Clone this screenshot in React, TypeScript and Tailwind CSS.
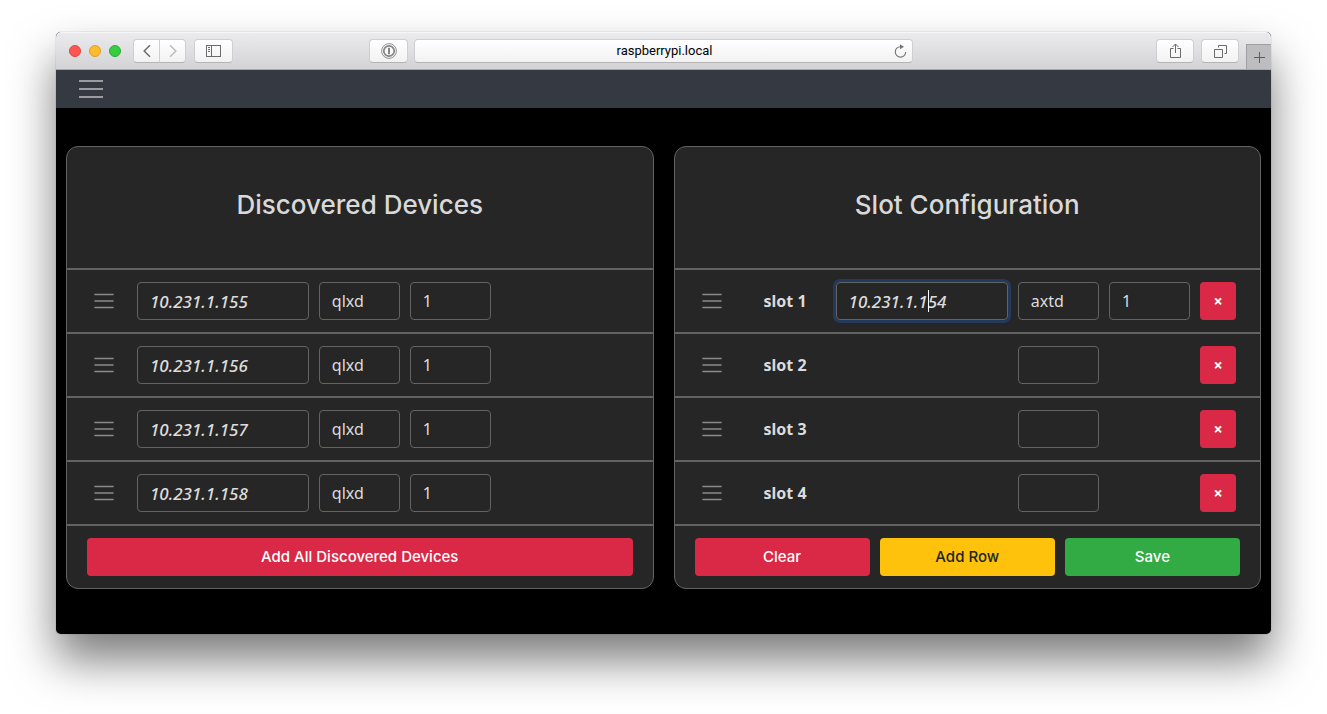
import { useState, type ReactNode } from "react";

type Device = { ip: string; type: string; channel: string };
type Slot = { id: number; type: string; ip?: string; channel?: string };

const devices: Device[] = [
  { ip: "10.231.1.155", type: "qlxd", channel: "1" },
  { ip: "10.231.1.156", type: "qlxd", channel: "1" },
  { ip: "10.231.1.157", type: "qlxd", channel: "1" },
  { ip: "10.231.1.158", type: "qlxd", channel: "1" },
];

const slots: Slot[] = [
  { id: 1, ip: "10.231.1.154", type: "axtd", channel: "1" },
  { id: 2, type: "" },
  { id: 3, type: "" },
  { id: 4, type: "" },
];

function ToolbarButton({ label, className, children }: { label: string; className: string; children: ReactNode }) {
  return (
    <button
      type="button"
      aria-label={label}
      className={`flex h-6 shrink-0 items-center justify-center border border-[#cfced0] border-b-[#b4b3b5] bg-linear-to-b from-white to-[#f2f2f2] ${className}`}
    >
      {children}
    </button>
  );
}

function BrowserBar() {
  return (
    <header className="grid h-[38px] grid-cols-[1fr_41%_1fr] items-center border-t border-b border-t-[#f6f6f6] border-b-[#a9a8aa] bg-linear-to-b from-[#ebeaec] to-[#d3d2d4]">
      <div className="flex items-center justify-between pr-1.5 pl-[13px]">
        <div className="flex items-center">
          <div className="mr-3 flex gap-2">
            <span className="size-3 rounded-full border border-[#e0443f] bg-[#fc5753]" />
            <span className="size-3 rounded-full border border-[#dfa023] bg-[#fdbc2e]" />
            <span className="size-3 rounded-full border border-[#27ab30] bg-[#36cd40]" />
          </div>
          <ToolbarButton label="Back" className="w-[27px] rounded-l">
            <svg width="10" height="14" viewBox="0 0 10 14" fill="none" stroke="#6b6b6b" strokeWidth="1.5">
              <path d="M8 1.2 2.2 7 8 12.8" />
            </svg>
          </ToolbarButton>
          <ToolbarButton label="Forward" className="mr-2 -ml-px w-[27px] rounded-r">
            <svg width="10" height="14" viewBox="0 0 10 14" fill="none" stroke="#bcbcbc" strokeWidth="1.5">
              <path d="M2 1.2 7.8 7 2 12.8" />
            </svg>
          </ToolbarButton>
          <ToolbarButton label="Show sidebar" className="w-[39px] rounded">
            <svg width="15" height="12" viewBox="0 0 15 12" fill="none" stroke="#6b6b6b">
              <rect x=".5" y=".5" width="14" height="11" />
              <path d="M5.5 .5v11M2 2.5h2M2 4.5h2M2 6.5h2" />
            </svg>
          </ToolbarButton>
        </div>
        <ToolbarButton label="Password manager" className="w-[39px] rounded">
          <svg width="16" height="16" viewBox="0 0 16 16" fill="none" stroke="#858585">
            <circle cx="8" cy="8" r="7.4" strokeWidth=".9" />
            <circle cx="8" cy="8" r="5.2" strokeWidth="1.7" />
            <path d="M8 4.8v6.4" strokeWidth="2" />
          </svg>
        </ToolbarButton>
      </div>
      <div className="flex h-6 items-center rounded border border-[#cfced0] border-b-[#b4b3b5] bg-linear-to-b from-white to-[#f2f2f2] pr-[5px] pl-5">
        <input
          aria-label="Address"
          defaultValue="raspberrypi.local"
          className="min-w-0 flex-1 text-center font-[Roboto,sans-serif] text-[13px] leading-5 text-black outline-none"
        />
        <button type="button" aria-label="Reload" className="shrink-0">
          <svg width="13" height="14" viewBox="0 0 13 14" fill="none" stroke="#757575" strokeWidth="1.1">
            <path d="M7 2.7H6.5a5.2 5.2 0 1 0 5.2 5.2" />
            <path d="M6 .2v5L10 2.7z" fill="#757575" stroke="none" />
          </svg>
        </button>
      </div>
      <div className="flex h-full items-center justify-end gap-[7px]">
        <ToolbarButton label="Share" className="w-[38px] rounded">
          <svg width="13" height="16" viewBox="0 0 13 16" fill="none" stroke="#6b6b6b">
            <path d="M4.5 5.5h-3v9h10v-9h-3M6.5 10V1M3.5 4l3-3 3 3" />
          </svg>
        </ToolbarButton>
        <ToolbarButton label="Show all tabs" className="w-[38px] rounded">
          <svg width="13" height="13" viewBox="0 0 13 13" fill="none" stroke="#6b6b6b">
            <path d="M.5 4.5h8v8h-8zM4.5 2.5v-2h8v8h-2" />
          </svg>
        </ToolbarButton>
        <button
          type="button"
          aria-label="New tab"
          className="flex h-[25px] w-[25px] items-center justify-center self-end border-t border-l border-[#a09fa1] bg-[#bdbcbe]"
        >
          <svg width="11" height="11" viewBox="0 0 11 11" stroke="#5e5e5e">
            <path d="M5.5 0v11M0 5.5h11" />
          </svg>
        </button>
      </div>
    </header>
  );
}

function Grip() {
  return (
    <button type="button" aria-label="Drag to reorder" className="flex h-[38px] cursor-grab items-center pl-[7px]">
      <svg width="20" height="16" viewBox="0 0 20 16" stroke="#8b8b8b" strokeWidth="1.5" strokeLinecap="round">
        <path d="M1 1.5h18M1 8h18M1 14.5h18" />
      </svg>
    </button>
  );
}

function Field({ label, value, className = "text-base" }: { label: string; value: string; className?: string }) {
  return (
    <input
      aria-label={label}
      defaultValue={value}
      className={`h-[38px] w-full min-w-0 rounded border border-[#636363] bg-transparent px-3 text-[#dcdcdc] outline-none focus:ring-3 focus:ring-[#233a5c] ${className}`}
    />
  );
}

function ActiveField({ label, value, caretAfter }: { label: string; value: string; caretAfter: string }) {
  const [editing, setEditing] = useState(false);
  return (
    <div className="relative" onFocus={() => setEditing(true)}>
      <Field label={label} value={value} className="text-[17px] font-medium italic ring-3 ring-[#233a5c]" />
      {!editing && (
        <span aria-hidden="true" className="pointer-events-none absolute inset-y-0 left-[13px] flex items-center">
          <span className="h-[22px] border-r border-white text-[17px] font-medium text-transparent italic select-none">
            {caretAfter}
          </span>
        </span>
      )}
    </div>
  );
}

function Panel({ title, children }: { title: string; children: ReactNode }) {
  return (
    <section className="min-w-0 divide-y-2 divide-[#636363] rounded-xl border border-[#636363] bg-[#262626]">
      <h2 className="flex h-[123px] items-center justify-center pb-1.5 font-[Inter,sans-serif] text-[26px] leading-8 font-medium text-[#d9d9d9]">
        {title}
      </h2>
      {children}
    </section>
  );
}

const actionClass = "h-[38px] flex-1 rounded font-[Inter,sans-serif] text-[15px] font-medium";

export default function App() {
  return (
    <div className="flex min-h-screen flex-col bg-white px-14 pt-8 pb-20 font-['Noto_Sans',sans-serif]">
      <div className="flex flex-1 flex-col overflow-hidden rounded-[5px] bg-black shadow-[0_0_1px_rgba(0,0,0,0.5),0_26px_46px_rgba(0,0,0,0.52)]">
        <BrowserBar />
        <nav className="flex h-[38px] items-center bg-[#353941] px-[23px]">
          <button type="button" aria-label="Menu">
            <svg width="24" height="18" viewBox="0 0 24 18" stroke="#9a9c9f" strokeWidth="2">
              <path d="M0 1h24M0 9h24M0 17h24" />
            </svg>
          </button>
        </nav>
        <main className="grid grid-cols-2 items-start gap-5 px-2.5 pt-[38px] pb-10">
          <Panel title="Discovered Devices">
            {devices.map((d) => (
              <div key={d.ip} className="grid grid-cols-[40px_172fr_81fr_81fr_132fr] items-center gap-2.5 px-5 py-3">
                <Grip />
                <Field label="IP address" value={d.ip} className="text-[17px] font-medium italic" />
                <Field label="Device type" value={d.type} />
                <Field label="Channel" value={d.channel} />
              </div>
            ))}
            <div className="flex px-5 py-3">
              <button type="button" className={`${actionClass} bg-[#da2946] text-white`}>
                Add All Discovered Devices
              </button>
            </div>
          </Panel>
          <Panel title="Slot Configuration">
            {slots.map((s) => (
              <div key={s.id} className="grid grid-cols-[40px_81fr_172fr_81fr_81fr_40px] items-center gap-2.5 px-5 py-3">
                <Grip />
                <span className="text-center text-base font-bold text-[#dcdcdc]">slot {s.id}</span>
                {s.ip ? <ActiveField label="IP address" value={s.ip} caretAfter="10.231.1.1" /> : <span />}
                <Field label="Device type" value={s.type} />
                {s.channel ? <Field label="Channel" value={s.channel} /> : <span />}
                <button
                  type="button"
                  aria-label={`Remove slot ${s.id}`}
                  className="h-[38px] w-9 rounded bg-[#da2946] text-base font-bold text-white"
                >
                  ×
                </button>
              </div>
            ))}
            <div className="flex gap-2.5 px-5 py-3">
              <button type="button" className={`${actionClass} bg-[#da2946] text-white`}>
                Clear
              </button>
              <button type="button" className={`${actionClass} bg-[#ffc20c] text-[#212529]`}>
                Add Row
              </button>
              <button type="button" className={`${actionClass} bg-[#32ab45] text-white`}>
                Save
              </button>
            </div>
          </Panel>
        </main>
      </div>
    </div>
  );
}
